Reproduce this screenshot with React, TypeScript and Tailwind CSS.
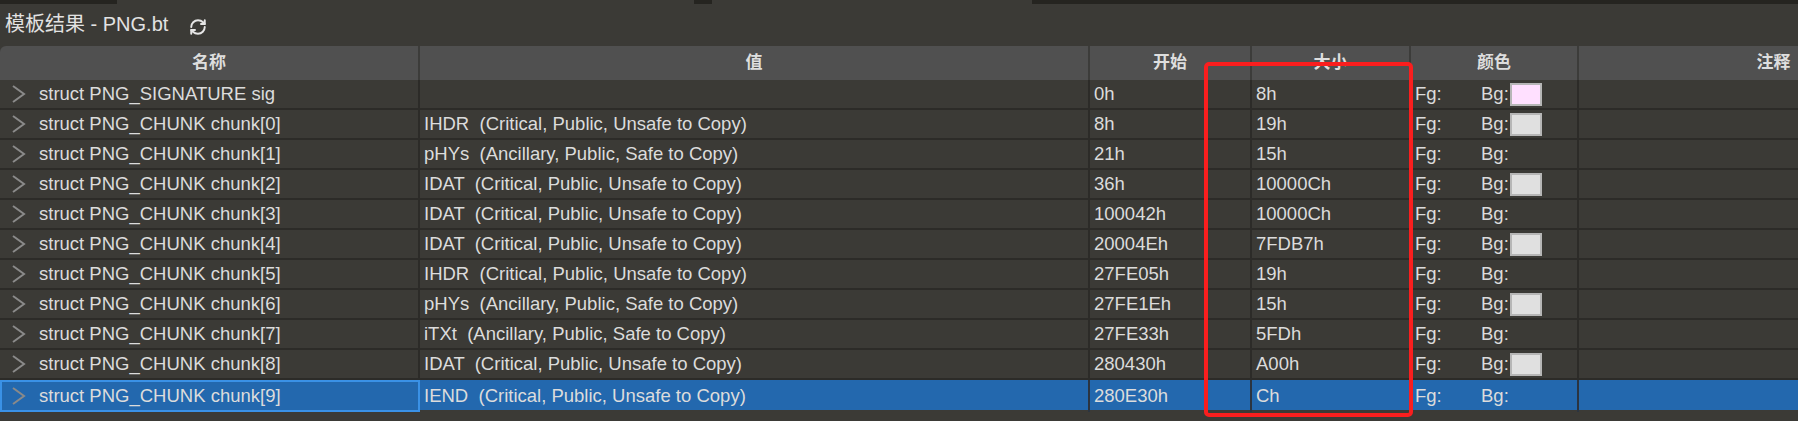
import { RefreshCw } from 'lucide-react';

type Row = {
  name: string;
  value: string;
  start: string;
  size: string;
  swatch?: string;
};

const rows: Row[] = [
  { name: 'struct PNG_SIGNATURE sig', value: '', start: '0h', size: '8h', swatch: 'bg-[#ffe0ff]' },
  { name: 'struct PNG_CHUNK chunk[0]', value: 'IHDR  (Critical, Public, Unsafe to Copy)', start: '8h', size: '19h', swatch: 'bg-[#e0e0e0]' },
  { name: 'struct PNG_CHUNK chunk[1]', value: 'pHYs  (Ancillary, Public, Safe to Copy)', start: '21h', size: '15h' },
  { name: 'struct PNG_CHUNK chunk[2]', value: 'IDAT  (Critical, Public, Unsafe to Copy)', start: '36h', size: '10000Ch', swatch: 'bg-[#e0e0e0]' },
  { name: 'struct PNG_CHUNK chunk[3]', value: 'IDAT  (Critical, Public, Unsafe to Copy)', start: '100042h', size: '10000Ch' },
  { name: 'struct PNG_CHUNK chunk[4]', value: 'IDAT  (Critical, Public, Unsafe to Copy)', start: '20004Eh', size: '7FDB7h', swatch: 'bg-[#e0e0e0]' },
  { name: 'struct PNG_CHUNK chunk[5]', value: 'IHDR  (Critical, Public, Unsafe to Copy)', start: '27FE05h', size: '19h' },
  { name: 'struct PNG_CHUNK chunk[6]', value: 'pHYs  (Ancillary, Public, Safe to Copy)', start: '27FE1Eh', size: '15h', swatch: 'bg-[#e0e0e0]' },
  { name: 'struct PNG_CHUNK chunk[7]', value: 'iTXt  (Ancillary, Public, Safe to Copy)', start: '27FE33h', size: '5FDh' },
  { name: 'struct PNG_CHUNK chunk[8]', value: 'IDAT  (Critical, Public, Unsafe to Copy)', start: '280430h', size: 'A00h', swatch: 'bg-[#e0e0e0]' },
  { name: 'struct PNG_CHUNK chunk[9]', value: 'IEND  (Critical, Public, Unsafe to Copy)', start: '280E30h', size: 'Ch' },
];

const cols = 'grid grid-cols-[420px_670px_162px_159px_168px_391px]';

function Chevron() {
  return (
    <svg width="16" height="20" viewBox="0 0 16 20" className="shrink-0">
      <polyline points="2,2 13,10 2,18" fill="none" stroke="#8a8a8a" strokeWidth="2" />
    </svg>
  );
}

export default function App() {
  return (
    <div className="relative w-[1798px] h-[421px] overflow-hidden bg-[#3b3a36] text-[#dcdcdc] font-['Liberation_Sans','Noto_Sans_CJK_SC',sans-serif]">
      {/* tab strip remnants */}
      <div className="flex h-[4px]">
        <div className="w-[117px] bg-[#252420]" />
        <div className="w-[577px]" />
        <div className="w-[18px] bg-[#252420]" />
        <div className="w-[320px]" />
        <div className="flex-1 bg-[#252420]" />
      </div>

      <div className="flex items-center h-[42px] pl-[5px] pb-[2px]">
        <span className="text-[20px] text-[#e2e2e2]">模板结果 - PNG.bt</span>
        <RefreshCw size={18} strokeWidth={2.6} className="ml-[21px] mt-[5px] text-[#e6e6e6]" />
      </div>

      <div className="w-[2000px]">
        <div className={`${cols} h-[34px] bg-[#505050] rounded-tl-[6px] text-[17px] font-bold text-[#dedede]`}>
          {['名称', '值', '开始', '大小', '颜色', '注释'].map((h) => (
            <div key={h} className="flex items-center justify-center border-r-2 border-[#3c3c3a]">
              {h}
            </div>
          ))}
        </div>

        {rows.map((r, i) => {
          const sel = i === rows.length - 1;
          const cell = `flex items-center pl-[4px] whitespace-pre border-r-2 ${sel ? 'border-[#2b3440]' : 'border-[#2c2b28]'}`;
          return (
            <div
              key={r.name}
              className={`${cols} h-[30px] text-[18.5px] ${sel ? 'bg-[#2368ae]' : 'border-b-2 border-[#2c2b28]'}`}
            >
              <div
                className={`flex items-center gap-[12px] ${sel ? 'border-2 border-[#3a91e6] pl-[9px]' : 'pl-[11px] border-r-2 border-[#2c2b28]'}`}
              >
                <Chevron />
                <span>{r.name}</span>
              </div>
              <div className={cell}>{r.value}</div>
              <div className={cell}>{r.start}</div>
              <div className={cell}>{r.size}</div>
              <div className={cell}>
                <span className="w-[66px]">Fg:</span>
                <span>Bg:</span>
                {r.swatch && <span className={`ml-[1px] w-[32px] h-[23px] border-2 border-[#b6b6b6] ${r.swatch}`} />}
              </div>
              <div className={cell} />
            </div>
          );
        })}
      </div>

      {/* annotation box */}
      <div className="absolute left-[1204px] top-[62px] w-[209px] h-[355px] border-4 border-[#fa1e1e] rounded-[5px]" />
    </div>
  );
}
